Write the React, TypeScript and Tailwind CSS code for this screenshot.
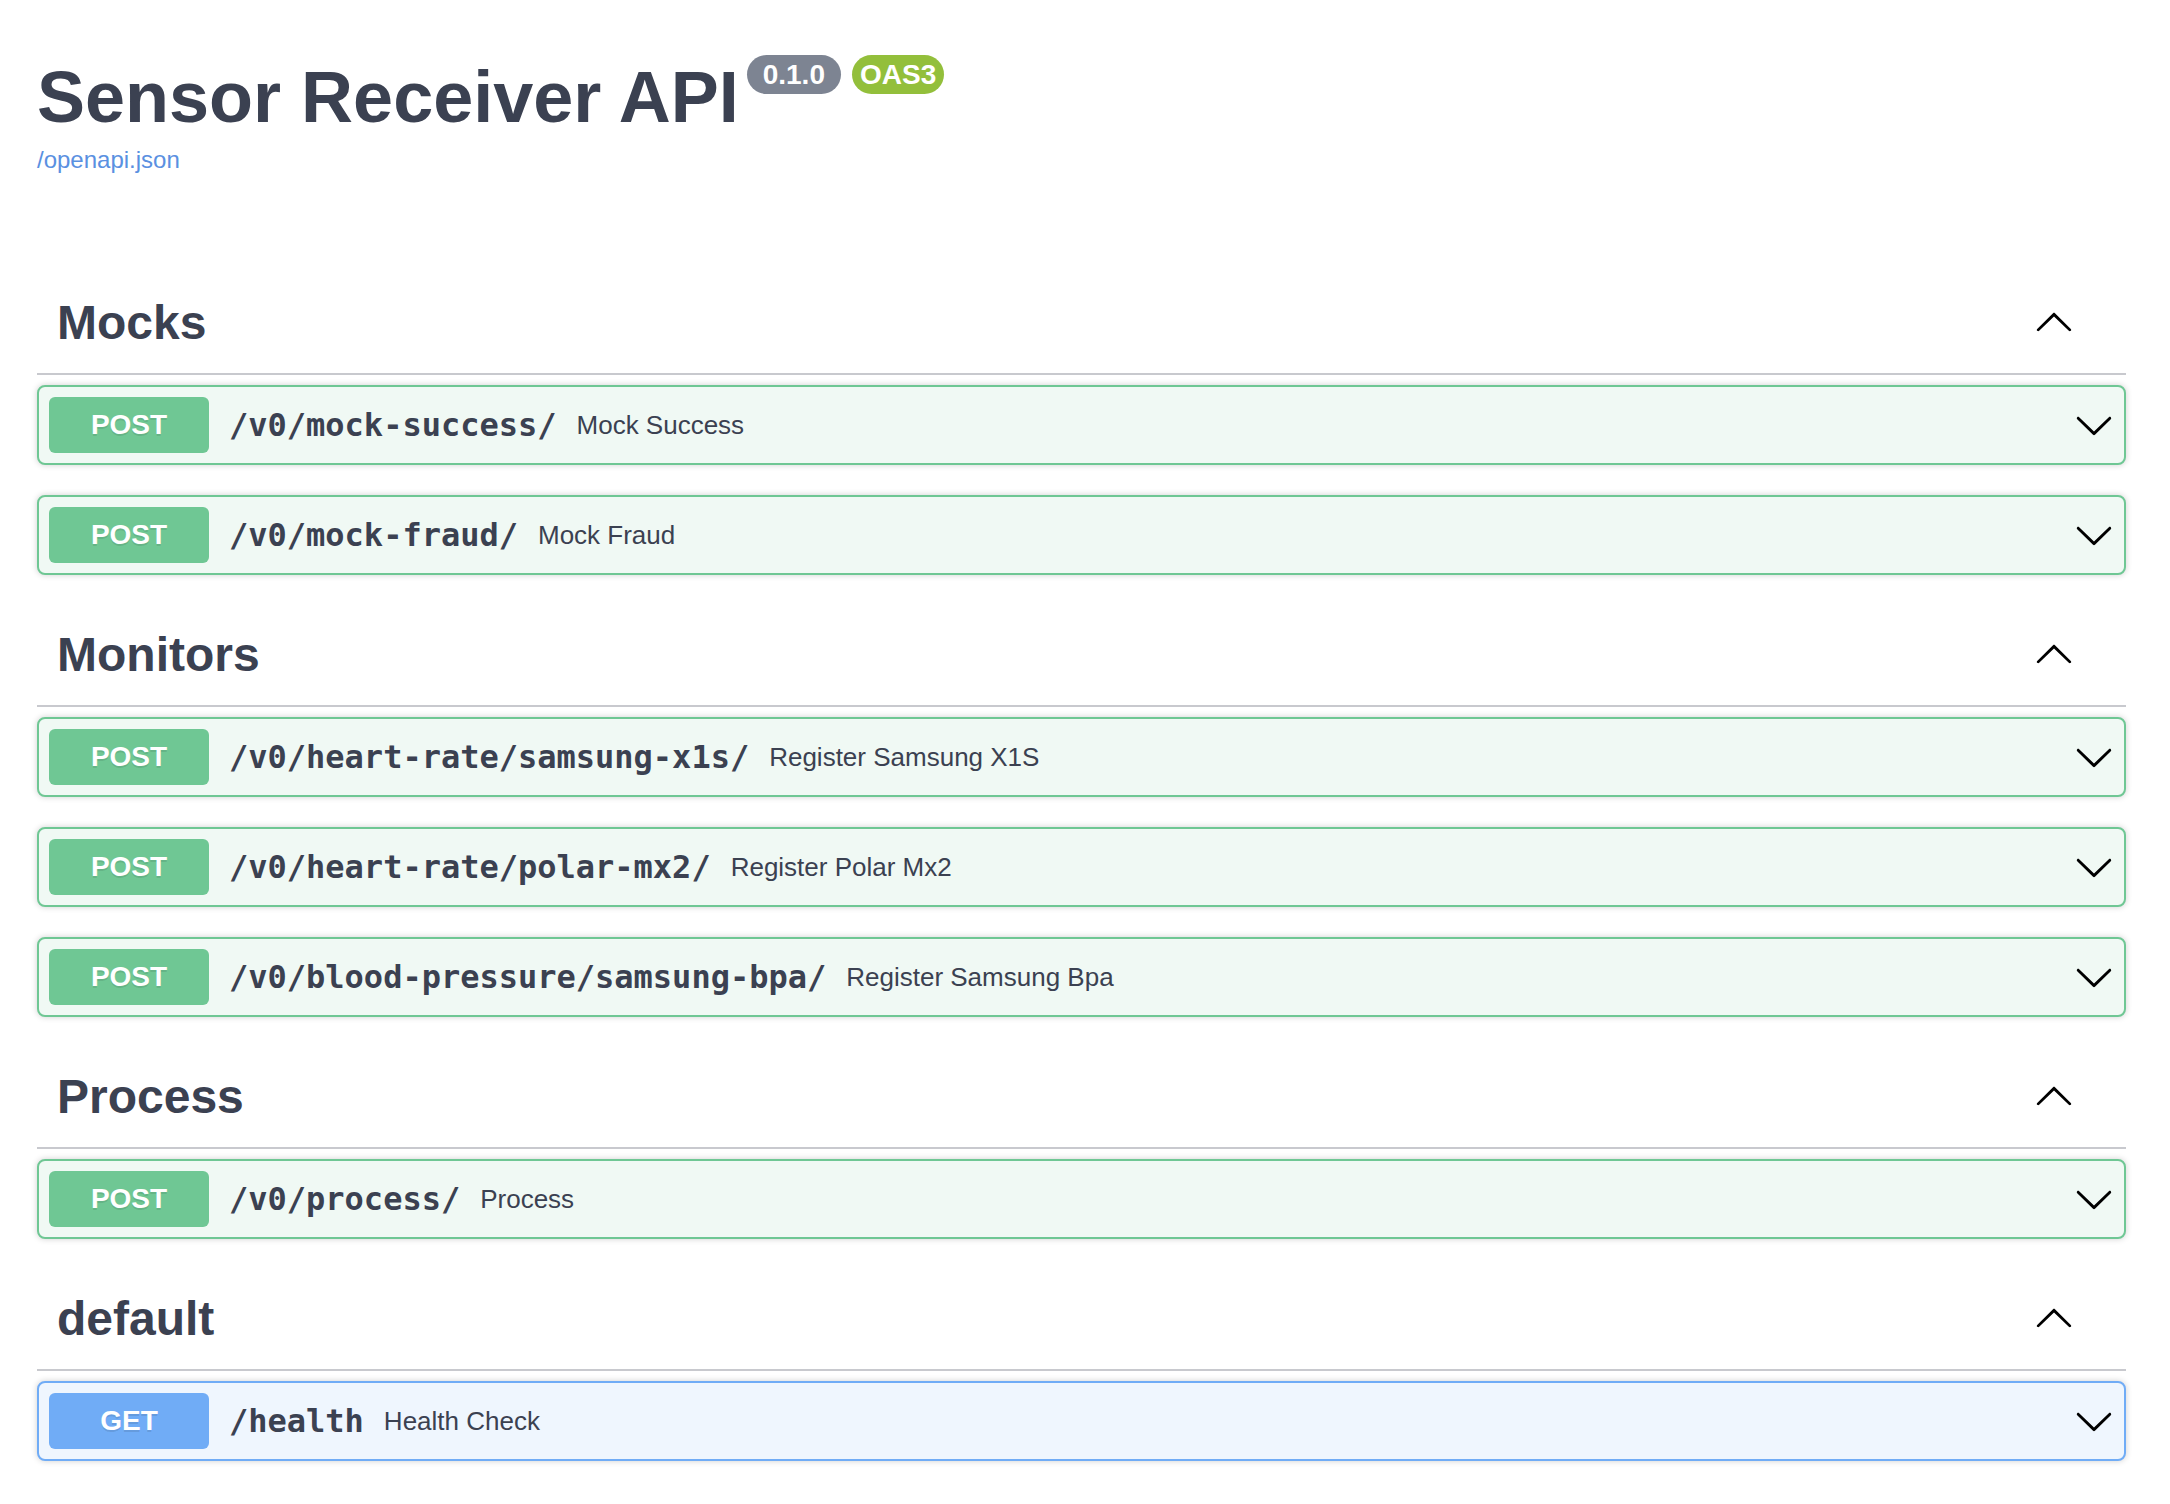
import React from "react";

type Op = { method: "POST" | "GET"; path: string; desc: string };
type Tag = { name: string; ops: Op[] };

const TAGS: Tag[] = [
  {
    name: "Mocks",
    ops: [
      { method: "POST", path: "/v0/mock-success/", desc: "Mock Success" },
      { method: "POST", path: "/v0/mock-fraud/", desc: "Mock Fraud" },
    ],
  },
  {
    name: "Monitors",
    ops: [
      { method: "POST", path: "/v0/heart-rate/samsung-x1s/", desc: "Register Samsung X1S" },
      { method: "POST", path: "/v0/heart-rate/polar-mx2/", desc: "Register Polar Mx2" },
      { method: "POST", path: "/v0/blood-pressure/samsung-bpa/", desc: "Register Samsung Bpa" },
    ],
  },
  {
    name: "Process",
    ops: [{ method: "POST", path: "/v0/process/", desc: "Process" }],
  },
  {
    name: "default",
    ops: [{ method: "GET", path: "/health", desc: "Health Check" }],
  },
];

const ArrowDown = () => (
  <svg width="40" height="40" viewBox="0 0 20 20" className="shrink-0" aria-hidden="true">
    <path
      fill="#000"
      d="M17.418 6.109c.272-.268.709-.268.979 0s.271.701 0 .969l-7.908 7.83c-.27.268-.707.268-.979 0l-7.908-7.83c-.27-.268-.27-.701 0-.969.271-.268.709-.268.979 0L10 13.25l7.418-7.141z"
    />
  </svg>
);

const ArrowUp = () => (
  <svg width="40" height="40" viewBox="0 0 20 20" className="shrink-0 mb-[5px]" aria-hidden="true">
    <path
      fill="#000"
      d="M17.418 14.908C17.69 15.176 18.127 15.176 18.397 14.908C18.667 14.64 18.668 14.207 18.397 13.939L10.489 6.109C10.219 5.841 9.782 5.841 9.51 6.109L1.602 13.939C1.332 14.207 1.332 14.64 1.602 14.908C1.873 15.176 2.311 15.176 2.581 14.908L10 7.767L17.418 14.908Z"
    />
  </svg>
);

function OpBlock({ op }: { op: Op }) {
  const isGet = op.method === "GET";
  return (
    <div
      className={
        isGet
          ? "mb-[30px] flex h-[80px] items-center rounded-[8px] border-2 border-[#70acf6] bg-[#eff6fe] p-[10px] shadow-[0_0_6px_rgba(0,0,0,0.19)]"
          : "mb-[30px] flex h-[80px] items-center rounded-[8px] border-2 border-[#6fc794] bg-[#f0f9f4] p-[10px] shadow-[0_0_6px_rgba(0,0,0,0.19)]"
      }
    >
      <span
        className={
          isGet
            ? "flex h-[56px] w-[160px] shrink-0 items-center justify-center rounded-[6px] bg-[#70acf6] text-[28px] font-bold text-white [text-shadow:0_2px_0_rgba(0,0,0,0.1)] [font-family:'Liberation_Sans',Arial,sans-serif]"
            : "flex h-[56px] w-[160px] shrink-0 items-center justify-center rounded-[6px] bg-[#6fc794] text-[28px] font-bold text-white [text-shadow:0_2px_0_rgba(0,0,0,0.1)] [font-family:'Liberation_Sans',Arial,sans-serif]"
        }
      >
        {op.method}
      </span>
      <span className="px-[20px] text-[32px] font-bold text-[#3b4151] [font-family:'DejaVu_Sans_Mono',monospace]">
        {op.path}
      </span>
      <span className="flex-1 text-[26px] text-[#3b4151] [font-family:'Liberation_Sans',Arial,sans-serif]">
        {op.desc}
      </span>
      <ArrowDown />
    </div>
  );
}

function TagSection({ tag }: { tag: Tag }) {
  return (
    <section className="flex flex-col">
      <h3 className="mb-[10px] flex h-[102px] items-center justify-between border-b-2 border-[#c8c9ce] pl-[20px] pr-[52px]">
        <span className="text-[48px] font-bold text-[#3b4151] [font-family:'Liberation_Sans',Arial,sans-serif]">
          {tag.name}
        </span>
        <ArrowUp />
      </h3>
      <div>
        {tag.ops.map((op) => (
          <OpBlock key={op.path} op={op} />
        ))}
      </div>
    </section>
  );
}

export default function App() {
  return (
    <div className="min-h-screen bg-white pl-[37px] pr-[44px] pt-[57px] [font-family:'Liberation_Sans',Arial,sans-serif]">
      <div className="flex flex-col">
        <div className="flex items-start">
          <h2 className="text-[72px] font-bold leading-[80px] text-[#3b4151]">Sensor Receiver API</h2>
          <span className="ml-[8px] mt-[-2px] h-[39px] rounded-full bg-[#7d8492] px-[16px] text-[28px] font-bold leading-[39px] text-white">
            0.1.0
          </span>
          <span className="ml-[11px] mt-[-2px] h-[39px] rounded-full bg-[#93bf3b] px-[8px] text-[28px] font-bold leading-[39px] text-white">
            OAS3
          </span>
        </div>
        <a className="mt-[9px] self-start text-[24px] leading-[28px] text-[#5a90e1]" href="#">
          /openapi.json
        </a>
      </div>
      <div className="mt-[99px] flex flex-col">
        {TAGS.map((t) => (
          <TagSection key={t.name} tag={t} />
        ))}
      </div>
    </div>
  );
}
